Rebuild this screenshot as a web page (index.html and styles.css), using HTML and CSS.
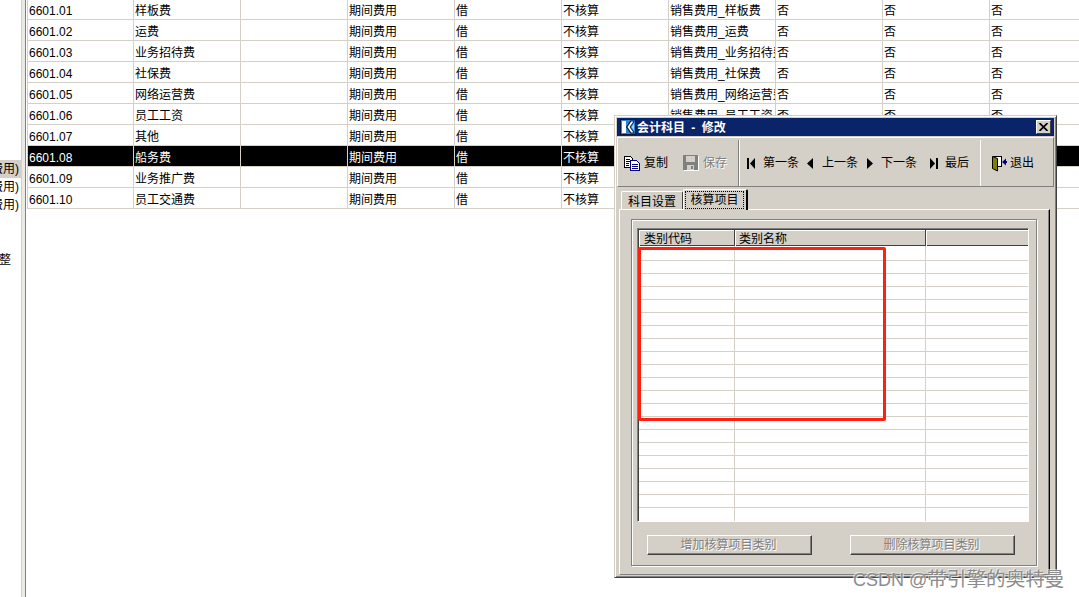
FILE: index.html
```html
<!DOCTYPE html>
<html lang="zh-CN">
<head>
<meta charset="utf-8">
<title>会计科目 - 修改</title>
<link rel="stylesheet" href="styles.css">
</head>
<body>
<div class="app">
  <aside class="tree">
    <div class="tree-item selected">销售费用)</div>
    <div class="tree-item">销售费用)</div>
    <div class="tree-item">销售费用)</div>
    <div class="tree-item adjust">调整</div>
  </aside>
  <div class="splitter"></div>
  <main class="table">
    <div class="row"><span>6601.01</span><span>样板费</span><span></span><span>期间费用</span><span>借</span><span>不核算</span><span>销售费用_样板费</span><span>否</span><span>否</span><span>否</span></div>
    <div class="row"><span>6601.02</span><span>运费</span><span></span><span>期间费用</span><span>借</span><span>不核算</span><span>销售费用_运费</span><span>否</span><span>否</span><span>否</span></div>
    <div class="row"><span>6601.03</span><span>业务招待费</span><span></span><span>期间费用</span><span>借</span><span>不核算</span><span>销售费用_业务招待费</span><span>否</span><span>否</span><span>否</span></div>
    <div class="row"><span>6601.04</span><span>社保费</span><span></span><span>期间费用</span><span>借</span><span>不核算</span><span>销售费用_社保费</span><span>否</span><span>否</span><span>否</span></div>
    <div class="row"><span>6601.05</span><span>网络运营费</span><span></span><span>期间费用</span><span>借</span><span>不核算</span><span>销售费用_网络运营费</span><span>否</span><span>否</span><span>否</span></div>
    <div class="row"><span>6601.06</span><span>员工工资</span><span></span><span>期间费用</span><span>借</span><span>不核算</span><span>销售费用_员工工资</span><span>否</span><span>否</span><span>否</span></div>
    <div class="row"><span>6601.07</span><span>其他</span><span></span><span>期间费用</span><span>借</span><span>不核算</span><span>销售费用_其他</span><span>否</span><span>否</span><span>否</span></div>
    <div class="row active"><span>6601.08</span><span>船务费</span><span></span><span>期间费用</span><span>借</span><span>不核算</span><span>销售费用_船务费</span><span>否</span><span>否</span><span>否</span></div>
    <div class="row"><span>6601.09</span><span>业务推广费</span><span></span><span>期间费用</span><span>借</span><span>不核算</span><span>销售费用_业务推广费</span><span>否</span><span>否</span><span>否</span></div>
    <div class="row"><span>6601.10</span><span>员工交通费</span><span></span><span>期间费用</span><span>借</span><span>不核算</span><span>销售费用_员工交通费</span><span>否</span><span>否</span><span>否</span></div>
  </main>
</div>

<section class="dialog">
  <header class="titlebar">
    <svg class="logo" width="16" height="16" viewBox="0 0 16 16">
      <rect width="16" height="16" fill="#06183c"/>
      <rect x="1" y="1" width="14" height="14" fill="#2a86d2"/>
      <rect x="2" y="2" width="4" height="12" fill="#ffffff"/>
      <path d="M6 8L10.5 1.5H15L10.5 8L15 14.5H10.5Z" fill="#06183c"/>
      <path d="M7.5 8L11.2 2.5H13.4L9.6 8L13.4 13.5H11.2Z" fill="#ffffff"/>
      <path d="M11.5 8L14 4.5V11.5Z" fill="#9fd8f5"/>
    </svg>
    <span class="title">会计科目 - 修改</span>
    <button class="close" type="button" aria-label="关闭">
      <svg width="9" height="8" viewBox="0 0 9 8"><path d="M0.5 0 L8.5 8 M8.5 0 L0.5 8" stroke="#000" stroke-width="1.7"/></svg>
    </button>
  </header>

  <div class="toolbar">
    <div class="tool-group file-tools">
      <span class="tool">
        <svg width="16" height="16" viewBox="0 0 16 16" shape-rendering="crispEdges">
          <path d="M0.5 1.5H6.5L8.5 3.5V12.5H0.5Z" fill="#fff" stroke="#000"/>
          <path d="M2 4H6M2 6H6M2 8H5M2 10H5" stroke="#000"/>
          <path d="M6.5 5.5H12.5L15.5 8.5V15.5H6.5Z" fill="#fff" stroke="#000080"/>
          <path d="M8 9H14M8 11H14M8 13H14" stroke="#000080"/>
        </svg>复制</span>
      <span class="tool disabled">
        <svg width="16" height="16" viewBox="0 0 16 16" shape-rendering="crispEdges">
          <rect x="1" y="1" width="15" height="15" fill="#fff"/>
          <rect width="15" height="15" fill="#808080"/>
          <rect x="3" y="1" width="9" height="6" fill="#d4d0c8"/>
          <rect x="4" y="10" width="7" height="5" fill="#d4d0c8"/>
          <rect x="8" y="11" width="2" height="3" fill="#808080"/>
        </svg>保存</span>
    </div>
    <div class="tool-group nav-tools">
      <span class="tool">
        <svg width="8" height="11" viewBox="0 0 8 11" shape-rendering="crispEdges"><rect width="2" height="11"/><path d="M8 0V11L3 5.5Z" shape-rendering="auto"/></svg>第一条</span>
      <span class="tool">
        <svg width="8" height="11" viewBox="0 0 8 11"><path d="M7 0V11L1 5.5Z"/></svg>上一条</span>
      <span class="tool">
        <svg width="8" height="11" viewBox="0 0 8 11"><path d="M2 0V11L8 5.5Z"/></svg>下一条</span>
      <span class="tool last">
        <svg width="8" height="11" viewBox="0 0 8 11" shape-rendering="crispEdges"><path d="M0 0V11L5 5.5Z" shape-rendering="auto"/><rect x="6" width="2" height="11"/></svg>最后</span>
    </div>
    <div class="tool-group exit-tools">
      <span class="tool exit">
        <svg width="16" height="17" viewBox="0 0 16 17">
          <path d="M1.5 1.5H10.5V11.5H5" fill="#fff" stroke="#000" shape-rendering="crispEdges"/>
          <path d="M1.5 1.5L6.5 3.5V16L1.5 13.5Z" fill="#808000" stroke="#000"/>
          <path d="M11 7L15 3.5V10.5Z" fill="#000080"/>
          <rect x="14" y="6" width="2" height="2" fill="#000080"/>
        </svg>退出</span>
    </div>
  </div>

  <div class="tabs">
    <span class="tab">科目设置</span>
    <span class="tab current"><span class="tab-focus">核算项目</span></span>
  </div>

  <div class="panel">
    <div class="group">
      <div class="grid">
        <div class="grid-inner">
          <div class="grid-head"><span>类别代码</span><span>类别名称</span><span></span></div>
          <div class="grid-row first"><i></i><i></i><i></i></div>
          <div class="grid-row"><i></i><i></i><i></i></div>
          <div class="grid-row"><i></i><i></i><i></i></div>
          <div class="grid-row"><i></i><i></i><i></i></div>
          <div class="grid-row"><i></i><i></i><i></i></div>
          <div class="grid-row"><i></i><i></i><i></i></div>
          <div class="grid-row"><i></i><i></i><i></i></div>
          <div class="grid-row"><i></i><i></i><i></i></div>
          <div class="grid-row"><i></i><i></i><i></i></div>
          <div class="grid-row"><i></i><i></i><i></i></div>
          <div class="grid-row"><i></i><i></i><i></i></div>
          <div class="grid-row"><i></i><i></i><i></i></div>
          <div class="grid-row"><i></i><i></i><i></i></div>
          <div class="grid-row"><i></i><i></i><i></i></div>
          <div class="grid-row"><i></i><i></i><i></i></div>
          <div class="grid-row"><i></i><i></i><i></i></div>
          <div class="grid-row"><i></i><i></i><i></i></div>
          <div class="grid-row"><i></i><i></i><i></i></div>
          <div class="grid-row"><i></i><i></i><i></i></div>
          <div class="grid-row"><i></i><i></i><i></i></div>
          <div class="grid-row end"><i></i><i></i><i></i></div>
        </div>
        <div class="highlight"></div>
      </div>
      <div class="actions">
        <button class="action" type="button" disabled>增加核算项目类别</button>
        <button class="action" type="button" disabled>删除核算项目类别</button>
      </div>
    </div>
  </div>
</section>

<div class="watermark"><span class="wm-latin">CSDN @</span>带引擎的奥特曼</div>
</body>
</html>
```

FILE: styles.css
```css
* { box-sizing: border-box; }

html, body {
  margin: 0;
  height: 100%;
  overflow: hidden;
  background: #fff;
}

body {
  position: relative;
  font: 12px/16px "Liberation Sans", "Noto Sans CJK SC", sans-serif;
  color: #000;
}

.app {
  display: flex;
  height: 597px;
  overflow: hidden;
}

/* left tree, clipped by the splitter */
.tree {
  flex: 0 0 21px;
  padding-top: 160px;
  overflow: hidden;
}

.tree-item {
  display: flex;
  justify-content: flex-end;
  align-items: center;
  height: 18px;
  padding-right: 2px;
  white-space: nowrap;
}

.tree-item.selected { background: #d4d0c8; }
.tree-item.adjust { margin-top: 37px; padding-right: 10px; }

.splitter {
  flex: 0 0 5px;
  border-left: 1px solid #d4d0c8;
  border-right: 1px solid #808080;
  background: #ebe9e4;
  margin-right: 1px;
}

/* main table */
.table {
  flex: 1;
  margin-top: -1px;
  min-width: 0;
  overflow: hidden;
  border-left: 1px solid #d4d0c8;
  align-self: flex-start;
}

.row {
  display: grid;
  grid-template-columns: 106px repeat(9, 107px);
  height: 21px;
  width: 1069px;
  border-bottom: 1px solid #d4d0c8;
}

.row span {
  display: block;
  padding: 3px 0 0 1px;
  line-height: 18px;
  border-right: 1px solid #d4d0c8;
  overflow: hidden;
  white-space: nowrap;
}

.row.active { background: #000; color: #fff; }

/* dialog window */
.dialog {
  position: absolute;
  left: 614px;
  top: 115px;
  width: 443px;
  height: 463px;
  padding: 2px;
  display: flex;
  flex-direction: column;
  background: #d4d0c8;
  border: 1px solid;
  border-color: #d4d0c8 #404040 #404040 #d4d0c8;
  box-shadow: inset 1px 1px 0 #fff, inset -1px -1px 0 #808080;
}

.titlebar {
  flex: 0 0 18px;
  display: flex;
  align-items: center;
  padding: 0 3px;
  background: #0a246a;
  color: #fff;
}

.logo { flex: none; }

.title {
  margin-left: 1px;
  padding-top: 1px;
  font-weight: 700;
  word-spacing: 3px;
  line-height: 16px;
}

.close {
  margin-left: auto;
  width: 15px;
  height: 14px;
  padding: 0;
  display: flex;
  align-items: center;
  justify-content: center;
  background: #d4d0c8;
  border: 1px solid;
  border-color: #fff #404040 #404040 #fff;
}

.toolbar {
  flex: 0 0 50px;
  display: flex;
  margin-top: 1px;
  border-top: 1px solid #fff;
  border-left: 1px solid #fff;
  border-right: 1px solid #808080;
  border-bottom: 1px solid #808080;
}

.tool-group {
  display: flex;
  align-items: center;
  margin: 2px 0 0;
}

.file-tools {
  flex: 0 0 121px;
  padding-left: 6px;
  gap: 15px;
  border-right: 1px solid #808080;
  box-shadow: 1px 0 0 #fff;
}

.nav-tools {
  flex: 0 0 242px;
  padding-left: 8px;
  gap: 7px;
  border-right: 1px solid #fff;
}

.exit-tools { padding-left: 10px; }

.tool {
  display: flex;
  align-items: center;
  gap: 8px;
  white-space: nowrap;
}

.file-tools .tool { gap: 4px; }
.tool.last { margin-left: 6px; gap: 7px; }
.tool.exit { gap: 3px; }

.tool.disabled {
  color: #808080;
  text-shadow: 1px 1px 0 #fff;
}

/* tabs */
.tabs {
  flex: 0 0 22px;
  display: flex;
  align-items: flex-end;
  padding-left: 4px;
  position: relative;
  z-index: 1;
}

.tab {
  height: 18px;
  width: 62px;
  padding-top: 2px;
  text-align: center;
  line-height: 16px;
  border: 1px solid;
  border-color: #fff #404040 transparent #fff;
  border-bottom: 0;
  border-radius: 2px 2px 0 0;
}

.tab.current {
  height: 21px;
  width: 65px;
  margin-bottom: -1px;
  padding: 2px 3px 0 2px;
  background: #d4d0c8;
  border-right: 2px solid #000;
  line-height: 16px;
}

.tab-focus {
  display: block;
  height: 16px;
  outline: 1px dotted #000;
}

/* tab panel */
.panel {
  flex: 1;
  margin: 0 4px 0 2px;
  padding: 9px 12px 8px 11px;
  border: 1px solid;
  border-color: #fff #000 #808080 #fff;
  box-shadow: inset -1px 0 0 #808080;
}

.group {
  height: 100%;
  padding: 8px 7px 0 5px;
  border: 1px solid #808080;
  box-shadow: inset 1px 1px 0 #fff, 1px 1px 0 #fff;
}

.grid {
  position: relative;
  height: 294px;
  border: 1px solid;
  border-color: #808080 #fff #fff #808080;
  background: #fff;
}

.grid-inner {
  border: solid #404040;
  border-width: 1px 0 0 1px;
}

.grid-head,
.grid-row {
  display: grid;
  grid-template-columns: 96px 191px 1fr;
}

.grid-head {
  height: 16px;
  background: #d4d0c8;
  border-bottom: 1px solid #404040;
}

.grid-head span {
  padding: 1px 0 0 4px;
  line-height: 16px;
  border-right: 1px solid #404040;
  box-shadow: inset 1px 1px 0 #fff;
}

.grid-head span:first-child { padding-left: 5px; }
.grid-head span:last-child { border-right: 0; }

.grid-row {
  height: 13px;
  border-bottom: 1px solid #d4d0c8;
}

.grid-row.first { height: 15px; }
.grid-row.end { border-bottom: 0; }

.grid-row i { border-right: 1px solid #d4d0c8; }
.grid-row i:last-child { border-right: 0; }

.highlight {
  position: absolute;
  left: 0;
  top: 18px;
  width: 248px;
  height: 174px;
  border: 3px solid #ff2010;
  border-radius: 2px;
}

.actions {
  display: flex;
  gap: 38px;
  margin-top: 13px;
  padding-left: 10px;
}

.action {
  width: 165px;
  height: 20px;
  padding: 0 2px 0 0;
  font: inherit;
  color: #808080;
  text-shadow: 1px 1px 0 #fff;
  background: #d4d0c8;
  border: 1px solid;
  border-color: #fff #404040 #404040 #fff;
  box-shadow: inset -1px -1px 0 #808080;
}

/* image watermark */
.watermark {
  position: absolute;
  left: 853px;
  top: 565px;
  display: flex;
  align-items: baseline;
  font-size: 19.6px;
  line-height: 28px;
  color: #8c8c8c;
  text-shadow: 1px 1px 0 rgba(255, 255, 255, .7), -1px -1px 0 rgba(255, 255, 255, .5);
  white-space: nowrap;
}

.wm-latin {
  font-size: 18px;
  white-space: pre;
}
```
